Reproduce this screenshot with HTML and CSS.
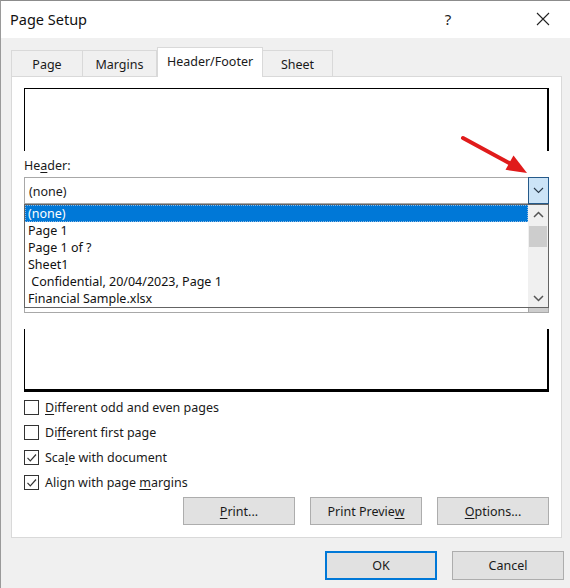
FILE: index.html
```html
<!DOCTYPE html>
<html>
<head>
<meta charset="utf-8">
<link rel="stylesheet" href="styles.css">
</head>
<body>
<div class="window">
  <div class="titlebar">
    <span class="title">Page Setup</span>
    <div class="tb-controls">
      <span class="help">?</span>
      <span class="close">
        <svg width="14" height="14" viewBox="0 0 14 14"><path d="M1 1 L13 13 M13 1 L1 13" stroke="#222" stroke-width="1.1" fill="none"/></svg>
      </span>
    </div>
  </div>

  <div class="tabs">
    <div class="tab t-page">Page</div>
    <div class="tab t-margins">Margins</div>
    <div class="tab t-hf active">Header/Footer</div>
    <div class="tab t-sheet">Sheet</div>
  </div>

  <div class="panel">
    <div class="preview preview-top"></div>
    <div class="field-label">He<u>a</u>der:</div>
    <div class="combo-wrap">
      <div class="combo focused">
        <span class="combo-text">(none)</span>
        <span class="combo-btn">
          <svg width="11" height="7" viewBox="0 0 11 7"><path d="M1 1 L5.5 5.5 L10 1" stroke="#2a3a4a" stroke-width="1.1" fill="none"/></svg>
        </span>
      </div>
      <div class="droplist">
        <div class="items">
          <div class="item selected">(none)</div>
          <div class="item">Page 1</div>
          <div class="item">Page 1 of ?</div>
          <div class="item">Sheet1</div>
          <div class="item">&nbsp;Confidential, 20/04/2023, Page 1</div>
          <div class="item">Financial Sample.xlsx</div>
        </div>
        <div class="scrollbar">
          <div class="sb-arrow">
            <svg width="11" height="7" viewBox="0 0 11 7"><path d="M1 6 L5.5 1.5 L10 6" stroke="#555" stroke-width="1.5" fill="none"/></svg>
          </div>
          <div class="sb-thumb"></div>
          <div class="sb-track"></div>
          <div class="sb-arrow">
            <svg width="11" height="7" viewBox="0 0 11 7"><path d="M1 1 L5.5 5.5 L10 1" stroke="#555" stroke-width="1.5" fill="none"/></svg>
          </div>
        </div>
      </div>
    </div>

    <div class="combo footer-combo">
      <span class="combo-text"></span>
      <span class="combo-btn plain"></span>
    </div>

    <div class="preview preview-bottom"></div>

    <div class="checks">
      <label class="check"><span class="box"></span><span><u>D</u>ifferent odd and even pages</span></label>
      <label class="check"><span class="box"></span><span>Di<u>f</u>ferent first page</span></label>
      <label class="check"><span class="box"><svg width="13" height="13" viewBox="0 0 13 13"><path d="M2.5 6.8 L5.3 9.8 L11 3.5" stroke="#333" stroke-width="1.2" fill="none"/></svg></span><span>Sca<u>l</u>e with document</span></label>
      <label class="check"><span class="box"><svg width="13" height="13" viewBox="0 0 13 13"><path d="M2.5 6.8 L5.3 9.8 L11 3.5" stroke="#333" stroke-width="1.2" fill="none"/></svg></span><span>Align with page <u>m</u>argins</span></label>
    </div>

    <div class="panel-buttons">
      <button class="btn"><u>P</u>rint...</button>
      <button class="btn">Print Previe<u>w</u></button>
      <button class="btn"><u>O</u>ptions...</button>
    </div>
  </div>

  <div class="dialog-buttons">
    <button class="btn default">OK</button>
    <button class="btn">Cancel</button>
  </div>

  <svg class="annot-arrow" width="570" height="588" viewBox="0 0 570 588">
    <line x1="463" y1="138" x2="512" y2="164.5" stroke="#e01b1b" stroke-width="4" stroke-linecap="round"/>
    <polygon points="527,173 505.5,169.8 513.5,155.5" fill="#e01b1b"/>
  </svg>
</div>
</body>
</html>
```

FILE: styles.css
```css
* { box-sizing: border-box; }
html, body { margin: 0; padding: 0; }
body {
  font-family: "Noto Sans", "Open Sans", sans-serif;
  font-size: 12.5px;
  color: #1a1a1a;
  background: #f0f0f0;
}
.window {
  position: relative;
  width: 570px;
  height: 588px;
  background: #f0f0f0;
  border-left: 1px solid #9a9a9a;
  border-top: 1px solid #8c8c8c;
  overflow: hidden;
}
.titlebar {
  height: 37px;
  background: #ffffff;
  display: flex;
  align-items: center;
  justify-content: space-between;
  padding-left: 9px;
}
.title {
  font-size: 14.5px;
  color: #111;
  margin-top: -2px;
}
.tb-controls {
  display: flex;
  align-items: center;
  height: 100%;
}
.help {
  width: 40px;
  text-align: center;
  font-size: 15px;
  color: #222;
  margin-right: 52px;
  margin-top: -2px;
}
.close {
  width: 46px;
  display: flex;
  justify-content: center;
  margin-right: 4px;
  margin-top: -2px;
}

.tabs {
  display: flex;
  align-items: flex-end;
  margin-left: 10px;
  margin-top: 9px;
  height: 29px;
}
.tab {
  height: 26px;
  border: 1px solid #d9d9d9;
  border-bottom: none;
  background: #f0f0f0;
  display: flex;
  align-items: center;
  justify-content: center;
  color: #1a1a1a;
  padding-top: 1px;
}
.t-page { width: 72px; }
.t-margins { width: 74px; border-left: none; }
.t-hf { width: 106px; }
.t-sheet { width: 70px; border-left: none; }
.tab.active {
  height: 30px;
  background: #ffffff;
  margin-bottom: -1px;
  position: relative;
  z-index: 1;
  padding-bottom: 3px;
}

.panel {
  margin-left: 10px;
  width: 551px;
  background: #ffffff;
  border: 1px solid #d9d9d9;
  padding: 11px 12px 12px 12px;
}
.preview {
  height: 63px;
  border-color: #000;
  border-style: solid;
}
.preview-top {
  border-width: 1px 2px 0 1px;
}
.preview-bottom {
  border-width: 0 2px 3px 1px;
  margin-top: 16px;
}
.field-label {
  height: 26px;
  padding-top: 6px;
  line-height: 17px;
  color: #1a1a1a;
}
.combo-wrap {
  position: relative;
}
.combo {
  height: 27px;
  display: flex;
  align-items: stretch;
  border: 1px solid #a8a8a8;
  border-right: none;
  background: #fff;
}
.combo-text {
  flex: 1;
  display: flex;
  align-items: center;
  padding-left: 4px;
  padding-top: 1px;
}
.combo-btn {
  width: 21px;
  margin-top: -1px;
  margin-bottom: -1px;
  background: #cce4f7;
  border: 1px solid #255a8a;
  display: flex;
  align-items: center;
  justify-content: center;
}
.combo-btn.plain {
  background: #cdcdcd;
  border-color: #a8a8a8;
}
.footer-combo {
  margin-top: 82px;
}

.droplist {
  position: absolute;
  left: 0;
  right: 0;
  top: 27px;
  height: 104px;
  background: #fff;
  border: 1px solid #646464;
  display: flex;
  z-index: 5;
}
.items {
  flex: 1;
}
.item {
  height: 17px;
  line-height: 17px;
  padding-left: 3px;
  white-space: pre;
  color: #111;
}
.item.selected {
  background: #0078d7;
  color: #fff;
  outline: 1px dotted #8fb8e0;
  outline-offset: -1px;
}
.scrollbar {
  width: 20px;
  background: #f0f0f0;
  display: flex;
  flex-direction: column;
}
.sb-arrow {
  height: 18px;
  display: flex;
  align-items: center;
  justify-content: center;
}
.sb-thumb {
  height: 21px;
  margin: 3px 1px 0 1px;
  background: #cdcdcd;
}
.sb-track { flex: 1; }

.checks {
  margin-top: 8px;
  display: flex;
  flex-direction: column;
  gap: 10px;
}
.check {
  display: flex;
  align-items: center;
  height: 15px;
  gap: 6px;
  color: #1a1a1a;
}
.box {
  width: 15px;
  height: 15px;
  border: 1px solid #333;
  background: #fff;
  display: flex;
  align-items: center;
  justify-content: center;
}

.panel-buttons {
  margin-top: 7px;
  display: flex;
  justify-content: flex-end;
  gap: 15px;
}
.btn {
  width: 112px;
  height: 28px;
  font-family: "Noto Sans", "Open Sans", sans-serif;
  font-size: 12.5px;
  color: #1a1a1a;
  background: #e1e1e1;
  border: 1px solid #adadad;
  padding: 0;
}
.dialog-buttons {
  margin-top: 13px;
  margin-right: 6px;
  display: flex;
  justify-content: flex-end;
  gap: 15px;
}
.dialog-buttons .btn {
  height: 29px;
}
.btn.default {
  border: 2px solid #0078d7;
}
u { text-underline-offset: 2px; text-decoration-thickness: 1px; }

.annot-arrow {
  position: absolute;
  left: -1px;
  top: -1px;
  z-index: 10;
  pointer-events: none;
}
```
